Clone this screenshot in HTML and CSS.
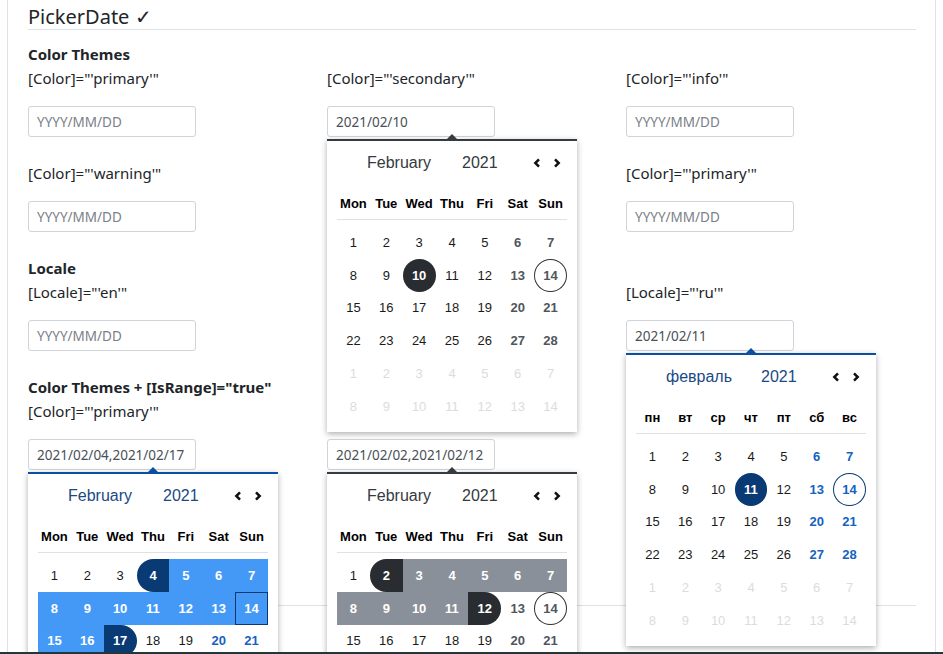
FILE: index.html
```html
<!DOCTYPE html>
<html lang="en">
<head>
<meta charset="utf-8">
<title>PickerDate</title>
<link rel="stylesheet" href="styles.css">
</head>
<body>
<div class="page">
  <h4 class="title">PickerDate ✓</h4>

  <section class="section">
    <h6 class="sec-title">Color Themes</h6>
    <div class="grid">
      <div class="item">
        <div class="label">[Color]="'primary'"</div>
        <div class="field"><input class="input" placeholder="YYYY/MM/DD"></div>
      </div>
      <div class="item">
        <div class="label">[Color]="'secondary'"</div>
        <div class="field">
          <input class="input" value="2021/02/10" placeholder="YYYY/MM/DD">
          <div class="cal dark">
            <div class="cal-head">
              <span class="cal-month">February</span><span class="cal-year">2021</span>
              <svg class="chev" width="8" height="10" viewBox="0 0 8 10"><path d="M6 1.3 2.3 5 6 8.7" /></svg>
              <svg class="chev next" width="8" height="10" viewBox="0 0 8 10"><path d="M2 1.3 5.7 5 2 8.7" /></svg>
            </div>
            <div class="cal-week"><span>Mon</span><span>Tue</span><span>Wed</span><span>Thu</span><span>Fri</span><span>Sat</span><span>Sun</span></div>
            <div class="cal-days">
              <span>1</span><span>2</span><span>3</span><span>4</span><span>5</span><span>6</span><span>7</span>
              <span>8</span><span>9</span><span class="sel">10</span><span>11</span><span>12</span><span>13</span><span class="today">14</span>
              <span>15</span><span>16</span><span>17</span><span>18</span><span>19</span><span>20</span><span>21</span>
              <span>22</span><span>23</span><span>24</span><span>25</span><span>26</span><span>27</span><span>28</span>
              <span class="nx">1</span><span class="nx">2</span><span class="nx">3</span><span class="nx">4</span><span class="nx">5</span><span class="nx">6</span><span class="nx">7</span>
              <span class="nx">8</span><span class="nx">9</span><span class="nx">10</span><span class="nx">11</span><span class="nx">12</span><span class="nx">13</span><span class="nx">14</span>
            </div>
          </div>
        </div>
      </div>
      <div class="item">
        <div class="label">[Color]="'info'"</div>
        <div class="field"><input class="input" placeholder="YYYY/MM/DD"></div>
      </div>
      <div class="item">
        <div class="label">[Color]="'warning'"</div>
        <div class="field"><input class="input" placeholder="YYYY/MM/DD"></div>
      </div>
      <div class="item">
        <div class="label">[Color]="'danger'"</div>
        <div class="field"><input class="input" placeholder="YYYY/MM/DD"></div>
      </div>
      <div class="item">
        <div class="label">[Color]="'primary'"</div>
        <div class="field"><input class="input" placeholder="YYYY/MM/DD"></div>
      </div>
    </div>
  </section>

  <section class="section">
    <h6 class="sec-title">Locale</h6>
    <div class="grid">
      <div class="item">
        <div class="label">[Locale]="'en'"</div>
        <div class="field"><input class="input" placeholder="YYYY/MM/DD"></div>
      </div>
      <div class="item">
        <div class="label">[Locale]="'zh-CN'"</div>
        <div class="field"><input class="input" placeholder="YYYY/MM/DD"></div>
      </div>
      <div class="item">
        <div class="label">[Locale]="'ru'"</div>
        <div class="field">
          <input class="input" value="2021/02/11" placeholder="YYYY/MM/DD">
          <div class="cal primary">
            <div class="cal-head">
              <span class="cal-month">февраль</span><span class="cal-year">2021</span>
              <svg class="chev" width="8" height="10" viewBox="0 0 8 10"><path d="M6 1.3 2.3 5 6 8.7" /></svg>
              <svg class="chev next" width="8" height="10" viewBox="0 0 8 10"><path d="M2 1.3 5.7 5 2 8.7" /></svg>
            </div>
            <div class="cal-week"><span>пн</span><span>вт</span><span>ср</span><span>чт</span><span>пт</span><span>сб</span><span>вс</span></div>
            <div class="cal-days">
              <span>1</span><span>2</span><span>3</span><span>4</span><span>5</span><span>6</span><span>7</span>
              <span>8</span><span>9</span><span>10</span><span class="sel">11</span><span>12</span><span>13</span><span class="today">14</span>
              <span>15</span><span>16</span><span>17</span><span>18</span><span>19</span><span>20</span><span>21</span>
              <span>22</span><span>23</span><span>24</span><span>25</span><span>26</span><span>27</span><span>28</span>
              <span class="nx">1</span><span class="nx">2</span><span class="nx">3</span><span class="nx">4</span><span class="nx">5</span><span class="nx">6</span><span class="nx">7</span>
              <span class="nx">8</span><span class="nx">9</span><span class="nx">10</span><span class="nx">11</span><span class="nx">12</span><span class="nx">13</span><span class="nx">14</span>
            </div>
          </div>
        </div>
      </div>
    </div>
  </section>

  <section class="section">
    <h6 class="sec-title">Color Themes + [IsRange]="true"</h6>
    <div class="grid">
      <div class="item">
        <div class="label">[Color]="'primary'"</div>
        <div class="field">
          <input class="input" value="2021/02/04,2021/02/17" placeholder="YYYY/MM/DD">
          <div class="cal primary">
            <div class="cal-head">
              <span class="cal-month">February</span><span class="cal-year">2021</span>
              <svg class="chev" width="8" height="10" viewBox="0 0 8 10"><path d="M6 1.3 2.3 5 6 8.7" /></svg>
              <svg class="chev next" width="8" height="10" viewBox="0 0 8 10"><path d="M2 1.3 5.7 5 2 8.7" /></svg>
            </div>
            <div class="cal-week"><span>Mon</span><span>Tue</span><span>Wed</span><span>Thu</span><span>Fri</span><span>Sat</span><span>Sun</span></div>
            <div class="cal-days">
              <span>1</span><span>2</span><span>3</span><span class="rs">4</span><span class="rng">5</span><span class="rng">6</span><span class="rng">7</span>
              <span class="rng">8</span><span class="rng">9</span><span class="rng">10</span><span class="rng">11</span><span class="rng">12</span><span class="rng">13</span><span class="rng sq">14</span>
              <span class="rng">15</span><span class="rng">16</span><span class="re">17</span><span>18</span><span>19</span><span>20</span><span>21</span>
              <span>22</span><span>23</span><span>24</span><span>25</span><span>26</span><span>27</span><span>28</span>
              <span class="nx">1</span><span class="nx">2</span><span class="nx">3</span><span class="nx">4</span><span class="nx">5</span><span class="nx">6</span><span class="nx">7</span>
              <span class="nx">8</span><span class="nx">9</span><span class="nx">10</span><span class="nx">11</span><span class="nx">12</span><span class="nx">13</span><span class="nx">14</span>
            </div>
          </div>
        </div>
      </div>
      <div class="item">
        <div class="label">[Color]="'secondary'"</div>
        <div class="field">
          <input class="input" value="2021/02/02,2021/02/12" placeholder="YYYY/MM/DD">
          <div class="cal dark">
            <div class="cal-head">
              <span class="cal-month">February</span><span class="cal-year">2021</span>
              <svg class="chev" width="8" height="10" viewBox="0 0 8 10"><path d="M6 1.3 2.3 5 6 8.7" /></svg>
              <svg class="chev next" width="8" height="10" viewBox="0 0 8 10"><path d="M2 1.3 5.7 5 2 8.7" /></svg>
            </div>
            <div class="cal-week"><span>Mon</span><span>Tue</span><span>Wed</span><span>Thu</span><span>Fri</span><span>Sat</span><span>Sun</span></div>
            <div class="cal-days">
              <span>1</span><span class="rs">2</span><span class="rng">3</span><span class="rng">4</span><span class="rng">5</span><span class="rng">6</span><span class="rng">7</span>
              <span class="rng">8</span><span class="rng">9</span><span class="rng">10</span><span class="rng">11</span><span class="re">12</span><span>13</span><span class="today">14</span>
              <span>15</span><span>16</span><span>17</span><span>18</span><span>19</span><span>20</span><span>21</span>
              <span>22</span><span>23</span><span>24</span><span>25</span><span>26</span><span>27</span><span>28</span>
              <span class="nx">1</span><span class="nx">2</span><span class="nx">3</span><span class="nx">4</span><span class="nx">5</span><span class="nx">6</span><span class="nx">7</span>
              <span class="nx">8</span><span class="nx">9</span><span class="nx">10</span><span class="nx">11</span><span class="nx">12</span><span class="nx">13</span><span class="nx">14</span>
            </div>
          </div>
        </div>
      </div>
      <div class="item">
        <div class="label">[Color]="'info'"</div>
        <div class="field"><input class="input" placeholder="YYYY/MM/DD"></div>
      </div>
    </div>
    <div class="divider"></div>
  </section>
</div>
<div class="winbar"></div>
</body>
</html>
```

FILE: styles.css
```css
* { box-sizing: border-box; }

html, body {
  margin: 0;
  background: #fff;
}

body {
  font-family: "Noto Sans", "Segoe UI", sans-serif;
  font-size: 15px;
  color: #212529;
}

.page {
  margin-left: 7px;
  width: 929px;
  min-height: 654px;
  border-left: 1px solid #dee2e6;
  border-right: 1px solid #dee2e6;
  padding: 5px 19px 0 20px;
}

.title {
  margin: 0 0 12px;
  font-size: 20px;
  font-weight: 400;
  line-height: 24px;
  border-bottom: 1px solid #dee2e6;
}

.sec-title {
  margin: 0;
  font-size: 15px;
  font-weight: 700;
  line-height: 24px;
}

.grid {
  display: grid;
  grid-template-columns: 299px 299px 1fr;
}

.item {
  margin-bottom: 24px;
}

.label {
  line-height: 24px;
}

.field {
  position: relative;
  width: 168px;
  margin-top: 16px;
}

.input {
  display: block;
  width: 168px;
  height: 31px;
  margin: 0;
  padding: 0 8px;
  border: 1px solid #ced4da;
  border-radius: 3px;
  font-family: "Noto Sans", sans-serif;
  font-size: 13.5px;
  color: #495057;
  background: #fff;
  outline: none;
}

.input::placeholder {
  color: #7a8087;
}

.divider {
  margin-top: 111px;
  border-top: 1px solid #dee2e6;
}

/* ---------- calendar popup ---------- */

.cal {
  position: absolute;
  top: calc(100% + 2px);
  left: 0;
  z-index: 5;
  width: 250px;
  padding-bottom: 9px;
  background: #fff;
  border-top: 2px solid var(--c);
  box-shadow: 0 2px 6px rgba(0, 0, 0, 0.32);
  font-family: "Liberation Sans", Arial, sans-serif;
  color: #1a1a1a;
}

.cal::before {
  content: "";
  position: absolute;
  left: 120px;
  top: -7px;
  border-left: 5px solid transparent;
  border-right: 5px solid transparent;
  border-bottom: 5px solid var(--c);
}

.cal.dark {
  --c: #363b40;
  --sel: #292c30;
  --rng: #8a9099;
  --we: #50565c;
  --head: #343a40;
  --ring: #333;
}

.cal.primary {
  --c: #0b4fa3;
  --sel: #0a3a74;
  --rng: #4499f7;
  --we: #1462c2;
  --head: #1b4986;
  --ring: #0a3a74;
}

.cal-head {
  display: flex;
  align-items: center;
  height: 43px;
  padding-left: 40px;
  font-size: 16px;
  color: var(--head);
}

.cal-month {
  width: 95px;
}

.cal-year {
  width: 71px;
}

.chev path {
  fill: none;
  stroke: #111;
  stroke-width: 2.5;
}

.chev.next {
  margin-left: 12px;
}

.cal-week {
  display: grid;
  grid-template-columns: repeat(7, 1fr);
  margin: 0 10px;
  padding: 12px 0 7px;
  border-bottom: 1px solid #dee2e6;
  font-size: 13px;
  font-weight: 700;
  line-height: 16px;
  text-align: center;
  color: #000;
}

.cal-days {
  display: grid;
  grid-template-columns: repeat(7, 1fr);
  grid-auto-rows: 32.8px;
  margin: 6px 10px 0;
  font-size: 13px;
}

.cal-days span {
  display: flex;
  align-items: center;
  justify-content: center;
}

.cal-days span:nth-child(7n+6),
.cal-days span:nth-child(7n) {
  font-weight: 700;
  color: var(--we);
}

.cal-days span.nx {
  font-weight: 400;
  color: #dcdcdc;
}

.cal-days span.today {
  border-radius: 50%;
  box-shadow: inset 0 0 0 1px var(--ring);
}

.cal-days span.sel {
  border-radius: 50%;
  background: var(--sel);
  color: #fff;
  font-weight: 700;
}

.cal-days span.rng {
  background: var(--rng);
  color: #fff;
  font-weight: 700;
}

.cal-days span.rs,
.cal-days span.re {
  background: var(--sel);
  color: #fff;
  font-weight: 700;
}

.cal-days span.rs {
  border-radius: 50% 0 0 50%;
}

.cal-days span.re {
  border-radius: 0 50% 50% 0;
}

.cal-days span.sq {
  box-shadow: inset 0 0 0 1px var(--sel);
}

.winbar {
  position: fixed;
  left: 0;
  right: 0;
  bottom: 0;
  z-index: 20;
  height: 2px;
  background: #22363d;
}
```
